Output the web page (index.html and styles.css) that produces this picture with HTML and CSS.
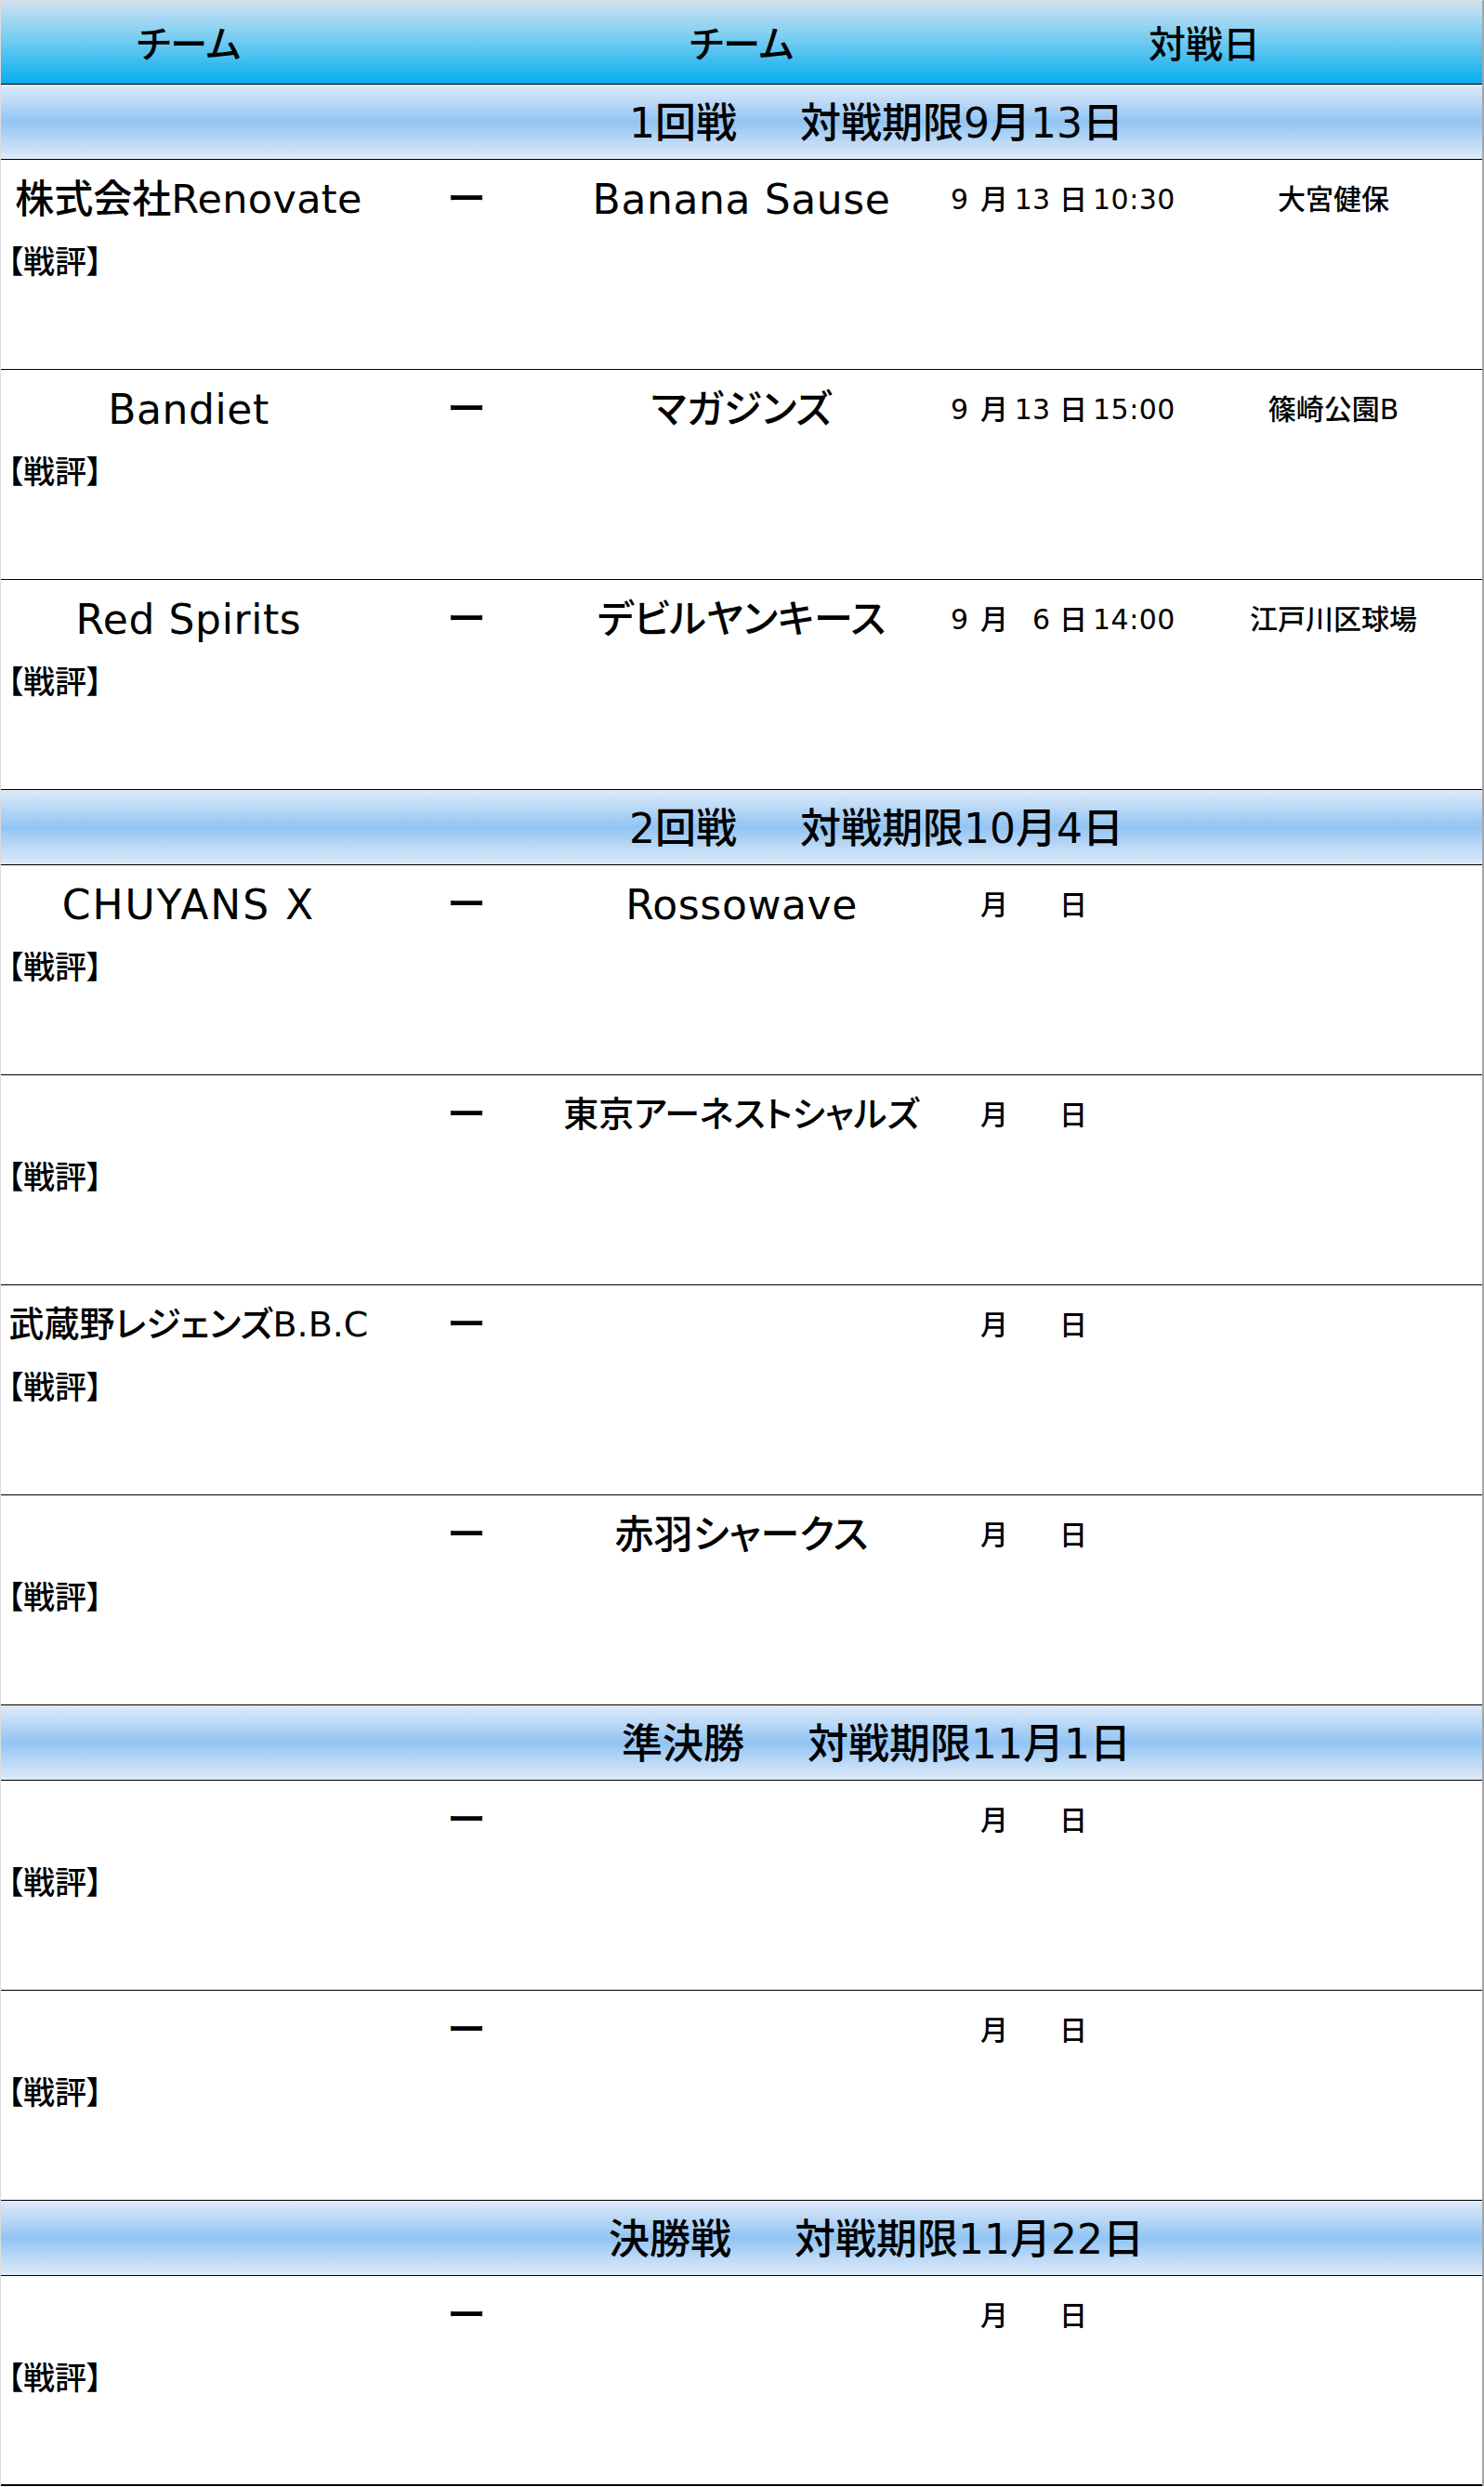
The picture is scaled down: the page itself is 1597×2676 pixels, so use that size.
FILE: index.html
```html
<!DOCTYPE html>
<html lang="ja">
<head>
<meta charset="utf-8">
<title>対戦表</title>
<link rel="stylesheet" href="styles.css">
</head>
<body>
<div class="sheet">
  <div class="head">
    <div class="h-team1">チーム</div>
    <div class="h-team2">チーム</div>
    <div class="h-date">対戦日</div>
  </div>

  <div class="round">
    <div class="round-label"><span>1回戦</span><span class="deadline">対戦期限9月13日</span></div>
  </div>
  <div class="match">
    <div class="line">
      <div class="team home">株式会社<span class="latin-part">Renovate</span></div>
      <div class="vs">ー</div>
      <div class="team away latin">Banana Sause</div>
      <div class="date"><span class="num m">9</span><span class="unit u1">月</span><span class="num d">13</span><span class="unit u2">日</span><span class="time">10:30</span></div>
      <div class="place">大宮健保</div>
    </div>
    <div class="review">【戦評】</div>
  </div>
  <div class="match">
    <div class="line">
      <div class="team home latin">Bandiet</div>
      <div class="vs">ー</div>
      <div class="team away">マガジンズ</div>
      <div class="date"><span class="num m">9</span><span class="unit u1">月</span><span class="num d">13</span><span class="unit u2">日</span><span class="time">15:00</span></div>
      <div class="place">篠崎公園B</div>
    </div>
    <div class="review">【戦評】</div>
  </div>
  <div class="match">
    <div class="line">
      <div class="team home latin">Red Spirits</div>
      <div class="vs">ー</div>
      <div class="team away">デビルヤンキース</div>
      <div class="date"><span class="num m">9</span><span class="unit u1">月</span><span class="num d">6</span><span class="unit u2">日</span><span class="time">14:00</span></div>
      <div class="place">江戸川区球場</div>
    </div>
    <div class="review">【戦評】</div>
  </div>

  <div class="round">
    <div class="round-label"><span>2回戦</span><span class="deadline">対戦期限10月4日</span></div>
  </div>
  <div class="match">
    <div class="line">
      <div class="team home latin wide">CHUYANS X</div>
      <div class="vs">ー</div>
      <div class="team away latin">Rossowave</div>
      <div class="date"><span class="num m"></span><span class="unit u1">月</span><span class="num d"></span><span class="unit u2">日</span><span class="time"></span></div>
      <div class="place"></div>
    </div>
    <div class="review">【戦評】</div>
  </div>
  <div class="match">
    <div class="line">
      <div class="team home"></div>
      <div class="vs">ー</div>
      <div class="team away small">東京アーネストシャルズ</div>
      <div class="date"><span class="num m"></span><span class="unit u1">月</span><span class="num d"></span><span class="unit u2">日</span><span class="time"></span></div>
      <div class="place"></div>
    </div>
    <div class="review">【戦評】</div>
  </div>
  <div class="match">
    <div class="line">
      <div class="team home small">武蔵野レジェンズB.B.C</div>
      <div class="vs">ー</div>
      <div class="team away"></div>
      <div class="date"><span class="num m"></span><span class="unit u1">月</span><span class="num d"></span><span class="unit u2">日</span><span class="time"></span></div>
      <div class="place"></div>
    </div>
    <div class="review">【戦評】</div>
  </div>
  <div class="match">
    <div class="line">
      <div class="team home"></div>
      <div class="vs">ー</div>
      <div class="team away">赤羽シャークス</div>
      <div class="date"><span class="num m"></span><span class="unit u1">月</span><span class="num d"></span><span class="unit u2">日</span><span class="time"></span></div>
      <div class="place"></div>
    </div>
    <div class="review">【戦評】</div>
  </div>

  <div class="round">
    <div class="round-label"><span>準決勝</span><span class="deadline">対戦期限11月1日</span></div>
  </div>
  <div class="match">
    <div class="line">
      <div class="team home"></div>
      <div class="vs">ー</div>
      <div class="team away"></div>
      <div class="date"><span class="num m"></span><span class="unit u1">月</span><span class="num d"></span><span class="unit u2">日</span><span class="time"></span></div>
      <div class="place"></div>
    </div>
    <div class="review">【戦評】</div>
  </div>
  <div class="match">
    <div class="line">
      <div class="team home"></div>
      <div class="vs">ー</div>
      <div class="team away"></div>
      <div class="date"><span class="num m"></span><span class="unit u1">月</span><span class="num d"></span><span class="unit u2">日</span><span class="time"></span></div>
      <div class="place"></div>
    </div>
    <div class="review">【戦評】</div>
  </div>

  <div class="round">
    <div class="round-label"><span>決勝戦</span><span class="deadline">対戦期限11月22日</span></div>
  </div>
  <div class="match last">
    <div class="line">
      <div class="team home"></div>
      <div class="vs">ー</div>
      <div class="team away"></div>
      <div class="date"><span class="num m"></span><span class="unit u1">月</span><span class="num d"></span><span class="unit u2">日</span><span class="time"></span></div>
      <div class="place"></div>
    </div>
    <div class="review">【戦評】</div>
  </div>
</div>
</body>
</html>
```

FILE: styles.css
```css
* {
  box-sizing: border-box;
  margin: 0;
  padding: 0;
}

body {
  margin: 0;
  background: #ffffff;
  color: #000000;
  font-family: "DejaVu Sans", "Noto Sans CJK JP", sans-serif;
  font-weight: 500;
  font-feature-settings: "palt";
}

.sheet {
  width: 1597px;
  border-top: 1px solid #dcdcdc;
  border-left: 1px solid #dcdcdc;
  border-right: 2px solid #a6a6a6;
}

.head,
.line,
.round {
  display: grid;
  grid-template-columns: 404px 194px 398px 278px 1fr;
}

/* header */
.head {
  height: 90px;
  border-bottom: 1px solid #000;
  background: linear-gradient(to bottom, #cfe2f4 0%, #78cdf1 45%, #05adee 100%);
}

.head > div {
  display: flex;
  align-items: center;
  justify-content: center;
  font-size: 40px;
  line-height: 1.2;
  padding-top: 5px;
}

.h-team1 { grid-column: 1; }
.h-team2 { grid-column: 3; }
.h-date { grid-column: 4 / 6; }

/* round band */
.round {
  height: 81px;
  border-bottom: 1px solid #000;
  background: linear-gradient(to bottom, #deeaf8 0%, #b9d8f6 25%, #92c4f3 50%, #b9d8f6 75%, #deeaf8 100%);
}

.round-label {
  grid-column: 3 / 5;
  display: flex;
  align-items: center;
  justify-content: center;
  padding-top: 4px;
  padding-left: 12px;
  font-size: 44px;
  line-height: 1.2;
  white-space: nowrap;
}

.deadline {
  margin-left: 68px;
}

/* match rows */
.match {
  height: 226px;
  border-bottom: 1px solid #000;
}

.match.last {
  border-bottom-width: 2px;
}

.line {
  height: 86px;
  align-items: center;
}

.team {
  font-size: 42px;
  line-height: 1.2;
  text-align: center;
  white-space: nowrap;
}

.team.latin {
  font-size: 44px;
  line-height: 1.15;
  letter-spacing: 0.6px;
}

.latin-part {
  font-size: 43px;
  letter-spacing: 0.3px;
}

.team.wide {
  letter-spacing: 2px;
}

.team.small {
  font-size: 38px;
}

.vs {
  font-size: 42px;
  line-height: 1.2;
  text-align: center;
}

.date {
  display: flex;
  align-items: baseline;
  font-size: 30px;
  line-height: 1.2;
  white-space: nowrap;
}

.num {
  display: inline-block;
  text-align: right;
}

.m { width: 45px; }
.u1 { margin-left: 13px; }
.d { width: 40px; margin-left: 5px; }
.u2 { margin-left: 10px; }
.time { margin-left: 6px; letter-spacing: 0.5px; }

.place {
  font-size: 30px;
  line-height: 1.2;
  text-align: center;
  white-space: nowrap;
}

.review {
  font-size: 34px;
  line-height: 48px;
  padding-left: 7px;
}
```
